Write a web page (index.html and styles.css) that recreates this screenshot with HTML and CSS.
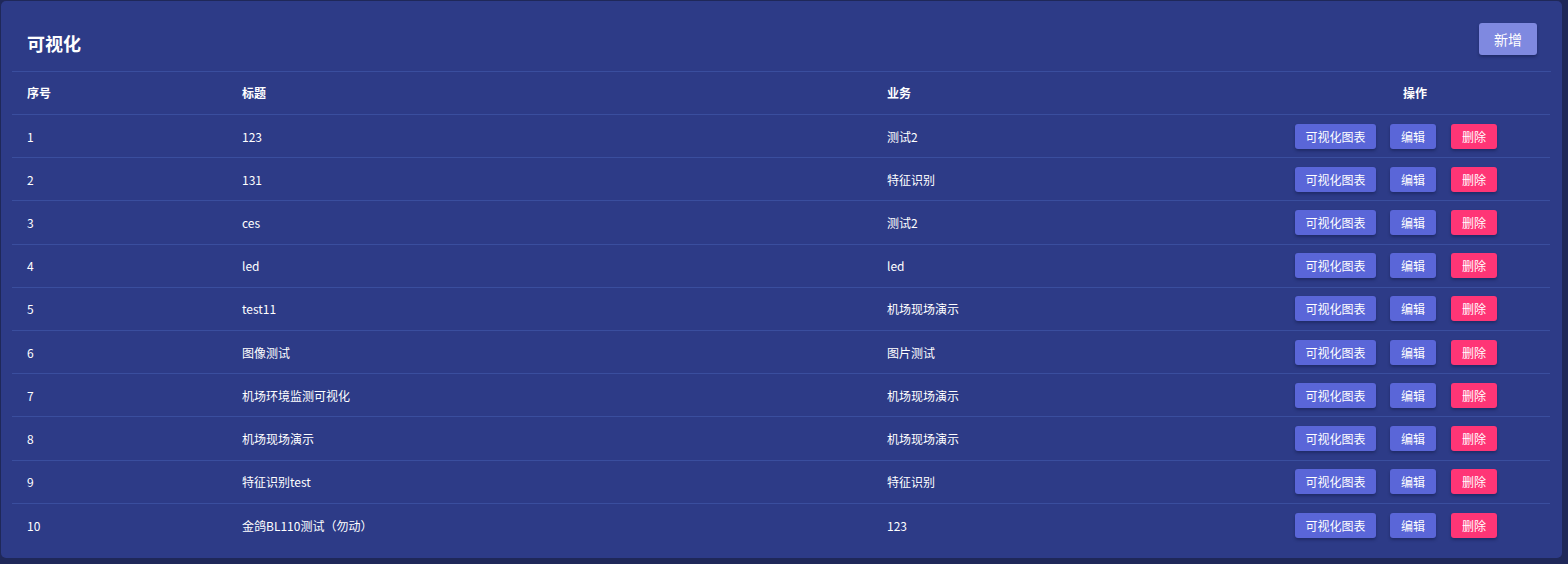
FILE: index.html
```html
<!DOCTYPE html>
<html lang="zh">
<head>
<meta charset="utf-8">
<title>可视化</title>
<link rel="stylesheet" href="styles.css">
</head>
<body>
<div class="card">
  <div class="card-head">
    <h1 class="title">可视化</h1>
    <button class="btn btn-add">新增</button>
  </div>
  <table class="table">
    <colgroup>
      <col class="c-no"><col class="c-title"><col class="c-biz"><col class="c-op">
    </colgroup>
    <thead>
      <tr><th>序号</th><th>标题</th><th>业务</th><th class="op-head">操作</th></tr>
    </thead>
    <tbody>
      <tr><td>1</td><td>123</td><td>测试2</td><td class="ops"><button class="btn btn-blue btn-wide">可视化图表</button><button class="btn btn-blue">编辑</button><button class="btn btn-pink">删除</button></td></tr>
      <tr><td>2</td><td>131</td><td>特征识别</td><td class="ops"><button class="btn btn-blue btn-wide">可视化图表</button><button class="btn btn-blue">编辑</button><button class="btn btn-pink">删除</button></td></tr>
      <tr><td>3</td><td>ces</td><td>测试2</td><td class="ops"><button class="btn btn-blue btn-wide">可视化图表</button><button class="btn btn-blue">编辑</button><button class="btn btn-pink">删除</button></td></tr>
      <tr><td>4</td><td>led</td><td>led</td><td class="ops"><button class="btn btn-blue btn-wide">可视化图表</button><button class="btn btn-blue">编辑</button><button class="btn btn-pink">删除</button></td></tr>
      <tr><td>5</td><td>test11</td><td>机场现场演示</td><td class="ops"><button class="btn btn-blue btn-wide">可视化图表</button><button class="btn btn-blue">编辑</button><button class="btn btn-pink">删除</button></td></tr>
      <tr><td>6</td><td>图像测试</td><td>图片测试</td><td class="ops"><button class="btn btn-blue btn-wide">可视化图表</button><button class="btn btn-blue">编辑</button><button class="btn btn-pink">删除</button></td></tr>
      <tr><td>7</td><td>机场环境监测可视化</td><td>机场现场演示</td><td class="ops"><button class="btn btn-blue btn-wide">可视化图表</button><button class="btn btn-blue">编辑</button><button class="btn btn-pink">删除</button></td></tr>
      <tr><td>8</td><td>机场现场演示</td><td>机场现场演示</td><td class="ops"><button class="btn btn-blue btn-wide">可视化图表</button><button class="btn btn-blue">编辑</button><button class="btn btn-pink">删除</button></td></tr>
      <tr><td>9</td><td>特征识别test</td><td>特征识别</td><td class="ops"><button class="btn btn-blue btn-wide">可视化图表</button><button class="btn btn-blue">编辑</button><button class="btn btn-pink">删除</button></td></tr>
      <tr><td>10</td><td>金鸽BL110测试（勿动）</td><td>123</td><td class="ops"><button class="btn btn-blue btn-wide">可视化图表</button><button class="btn btn-blue">编辑</button><button class="btn btn-pink">删除</button></td></tr>
    </tbody>
  </table>
</div>
</body>
</html>
```
FILE: styles.css
```css
* { box-sizing: border-box; }
html, body {
  margin: 0;
  padding: 0;
  background: #1f2859;
  font-family: "Noto Sans CJK SC", "Liberation Sans", sans-serif;
  color: #ffffff;
}
body { padding: 1px 0 0 1px; }
.card {
  width: 1561px;
  height: 557px;
  background: #2d3b87;
  border-radius: 5px;
  padding: 0 11px;
}
.card-head {
  height: 71px;
  display: flex;
  align-items: center;
  justify-content: space-between;
  padding: 0 14px 0 15px;
  border-bottom: 1px solid #3a4e9e;
}
.title {
  margin: 0;
  font-size: 18px;
  font-weight: 700;
  line-height: 24px;
  padding-top: 13px;
}
.btn {
  border: none;
  border-radius: 3px;
  color: #ffffff;
  font-family: inherit;
  font-size: 12px;
  line-height: 25px;
  height: 25px;
  width: 46px;
  padding: 0;
  cursor: pointer;
  box-shadow: 0 2px 3px rgba(10, 15, 50, 0.35);
}
.btn-add {
  width: 58px;
  height: 32px;
  line-height: 32px;
  font-size: 14px;
  background: #7f89e0;
  margin-top: 6px;
}
.table {
  width: 1538px;
  border-collapse: collapse;
  table-layout: fixed;
  font-size: 12px;
}
.c-no { width: 215px; }
.c-title { width: 645px; }
.c-biz { width: 408px; }
.c-op { width: 270px; }
.table th, .table td {
  height: 43.22px;
  padding: 0 15px;
  text-align: left;
  border-bottom: 1px solid #3a4e9e;
  vertical-align: middle;
  white-space: nowrap;
}
.table th { font-weight: 700; height: 42.45px; }
.table tbody tr:last-child td { border-bottom: none; }
.table th.op-head { text-align: center; }
.ops { font-size: 0; }
.ops .btn { margin-right: 14px; vertical-align: middle; }
.ops .btn-pink { margin-left: 1px; }
.btn-blue { background: #5a66d8; }
.btn-wide { width: 81px; }
.btn-pink { background: #ff3576; }
```
